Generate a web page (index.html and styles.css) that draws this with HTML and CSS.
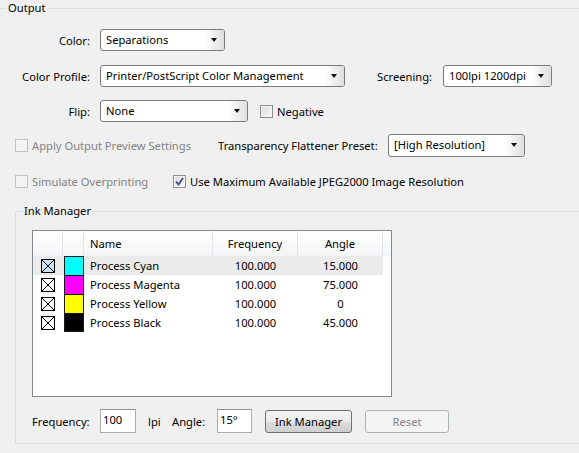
FILE: index.html
```html
<!DOCTYPE html>
<html>
  <head>
    <meta charset="UTF-8" />
    <title>Output</title>
    <link rel="stylesheet" href="styles.css">
  </head>
  <body>
    <div class="group-head"><span class="group-title">Output</span></div>

    <div class="row row-1">
      <span class="lbl">Color:</span>
      <div class="combo w-color"><span class="combo-text">Separations</span><span class="drop"></span></div>
    </div>

    <div class="row row-2">
      <span class="lbl">Color Profile:</span>
      <div class="combo w-profile"><span class="combo-text">Printer/PostScript Color Management</span><span class="drop"></span></div>
      <span class="lbl-screen">Screening:</span>
      <div class="combo w-screen"><span class="combo-text">100lpi 1200dpi</span><span class="drop"></span></div>
    </div>

    <div class="row row-3">
      <span class="lbl">Flip:</span>
      <div class="combo w-flip"><span class="combo-text">None</span><span class="drop"></span></div>
      <label class="check check-negative"><span class="box"></span>Negative</label>
    </div>

    <div class="row row-4">
      <label class="check disabled first-preview"><span class="box"></span>Apply Output Preview Settings</label>
      <span class="lbl-flat">Transparency Flattener Preset:</span>
      <div class="combo w-flat"><span class="combo-text">[High Resolution]</span><span class="drop"></span></div>
    </div>

    <div class="row row-5">
      <label class="check disabled first-overprint"><span class="box"></span>Simulate Overprinting</label>
      <label class="check">
        <span class="box checked">
          <svg width="9" height="9" viewBox="0 0 9 9"><path d="M1 4.5L3.5 7.5L8 1" fill="none" stroke="#3b4f8a" stroke-width="1.8"/></svg>
        </span>Use Maximum Available JPEG2000 Image Resolution
      </label>
    </div>

    <fieldset class="ink-group">
      <legend>Ink Manager</legend>

      <div class="ink-list">
        <div class="ink-head">
          <span class="col-check"></span>
          <span class="col-swatch"></span>
          <span class="col-name">Name</span>
          <span class="col-num">Frequency</span>
          <span class="col-num">Angle</span>
          <span class="col-rest"></span>
        </div>
        <div class="ink-row selected">
          <span class="col-check"><svg class="xbox xbox-hot" width="14" height="14" viewBox="0 0 14 14"><rect x="0.5" y="0.5" width="13" height="13"/><path d="M1 1L13 13M13 1L1 13"/></svg></span>
          <span class="col-swatch"><span class="swatch cyan"></span></span>
          <span class="col-name">Process Cyan</span>
          <span class="col-num">100.000</span>
          <span class="col-num">15.000</span>
        </div>
        <div class="ink-row">
          <span class="col-check"><svg class="xbox" width="14" height="14" viewBox="0 0 14 14"><rect x="0.5" y="0.5" width="13" height="13"/><path d="M1 1L13 13M13 1L1 13"/></svg></span>
          <span class="col-swatch"><span class="swatch magenta"></span></span>
          <span class="col-name">Process Magenta</span>
          <span class="col-num">100.000</span>
          <span class="col-num">75.000</span>
        </div>
        <div class="ink-row">
          <span class="col-check"><svg class="xbox" width="14" height="14" viewBox="0 0 14 14"><rect x="0.5" y="0.5" width="13" height="13"/><path d="M1 1L13 13M13 1L1 13"/></svg></span>
          <span class="col-swatch"><span class="swatch yellow"></span></span>
          <span class="col-name">Process Yellow</span>
          <span class="col-num">100.000</span>
          <span class="col-num">0</span>
        </div>
        <div class="ink-row">
          <span class="col-check"><svg class="xbox" width="14" height="14" viewBox="0 0 14 14"><rect x="0.5" y="0.5" width="13" height="13"/><path d="M1 1L13 13M13 1L1 13"/></svg></span>
          <span class="col-swatch"><span class="swatch black last"></span></span>
          <span class="col-name">Process Black</span>
          <span class="col-num">100.000</span>
          <span class="col-num">45.000</span>
        </div>
      </div>

      <div class="ink-controls">
        <span class="lbl-freq">Frequency:</span>
        <input class="field field-freq" type="text" value="100" />
        <span class="lbl-lpi">lpi</span>
        <span class="lbl-angle">Angle:</span>
        <input class="field field-angle" type="text" value="15°" />
        <button class="btn btn-ink">Ink Manager</button>
        <button class="btn btn-reset" disabled>Reset</button>
      </div>
    </fieldset>
  </body>
</html>
```

FILE: styles.css
```css
html,
body {
  margin: 0;
  width: 579px;
  height: 453px;
  overflow: hidden;
}
body {
  background-color: #f0f0f0;
  color: #000;
  font-family: "Noto Sans", "Open Sans", sans-serif;
  font-size: 11.2px;
}

/* group box title with rule */
.group-head {
  display: flex;
  align-items: center;
  height: 16px;
}
.group-head::before {
  content: "";
  width: 6px;
  border-top: 1px solid #d5dfe5;
}
.group-head::after {
  content: "";
  flex: 1;
  border-top: 1px solid #d5dfe5;
}
.group-title {
  padding: 0 2px;
  line-height: 16px;
}

.row {
  display: flex;
  align-items: center;
  height: 22px;
}
.row-1 {
  margin-top: 13px;
}
.row-2 {
  margin-top: 14px;
}
.row-3 {
  margin-top: 13px;
}
.row-4 {
  margin-top: 12px;
  height: 23px;
}
.row-5 {
  margin-top: 13px;
}
.lbl {
  width: 82px;
  margin: 0 10px 0 8px;
  text-align: right;
}
.lbl-screen {
  width: 55px;
  margin: 0 11px 0 32px;
  white-space: nowrap;
}
.lbl-flat {
  width: 158px;
  margin-right: 12px;
  white-space: nowrap;
}

/* combo boxes */
.combo {
  display: flex;
  box-sizing: border-box;
  height: 22px;
  border: 1px solid #7a7a7a;
  border-radius: 3px;
  background-color: #fff;
  overflow: hidden;
}
.row-4 .combo {
  height: 23px;
}
.combo-text {
  flex: 1;
  padding-left: 5px;
  line-height: 20px;
  white-space: nowrap;
  overflow: hidden;
}
.drop {
  position: relative;
  width: 19px;
  background: linear-gradient(to right, #ffffff, #dedede);
}
.drop::after {
  content: "";
  position: absolute;
  left: 6px;
  top: 8px;
  border-left: 3.5px solid transparent;
  border-right: 3.5px solid transparent;
  border-top: 4px solid #111;
}
.w-color {
  width: 125px;
}
.w-profile {
  width: 245px;
}
.w-screen {
  width: 109px;
}
.w-flip {
  width: 148px;
}
.w-flat {
  width: 137px;
}

/* check boxes */
.check {
  display: flex;
  align-items: center;
  white-space: nowrap;
}
.check .box {
  display: flex;
  align-items: center;
  justify-content: center;
  box-sizing: border-box;
  width: 13px;
  height: 13px;
  margin-right: 4px;
  border: 1px solid #8e8f8f;
  background: linear-gradient(135deg, #dcdcdc, #f8f8f8);
  box-shadow: inset 0 0 0 1px #f4f4f4;
}
.check-negative {
  margin-left: 12px;
}
.check.disabled {
  color: #838383;
}
.check.disabled .box {
  border-color: #c2c2c2;
  background: #f4f4f4;
  box-shadow: none;
}
.first-preview {
  width: 203px;
  margin-left: 15px;
}
.first-overprint {
  width: 158px;
  margin-left: 15px;
}

/* Ink Manager group, its right edge runs off the panel */
.ink-group {
  box-sizing: border-box;
  width: 564px;
  height: 241px;
  margin: 11px 0 0 15px;
  padding: 0;
  border: 1px solid #d5dfe5;
  border-right: none;
}
.ink-group legend {
  margin-left: 7px;
  padding: 0 1px;
  line-height: 16px;
}

.ink-list {
  box-sizing: border-box;
  width: 360px;
  height: 167px;
  margin: 11px 0 0 16px;
  border: 1px solid #828790;
  background-color: #fff;
}
.ink-head {
  display: flex;
  height: 25px;
  background: linear-gradient(#ffffff, #f3f4f6);
}
.ink-head span {
  box-sizing: border-box;
  line-height: 25px;
  border-right: 1px solid #e3e5e8;
}
.ink-head .col-rest {
  flex: 1;
  border-right: none;
}
.ink-row {
  display: flex;
  width: 350px;
  height: 19px;
  line-height: 19px;
}
.ink-row.selected {
  background-color: #ebebeb;
}
.col-check {
  display: flex;
  align-items: center;
  justify-content: center;
  width: 30px;
  flex: none;
}
.col-swatch {
  width: 21px;
  flex: none;
}
.col-name {
  width: 129px;
  padding-left: 6px;
  box-sizing: border-box;
  flex: none;
}
.col-num {
  width: 85px;
  text-align: center;
  flex: none;
}
.xbox rect {
  fill: #fff;
  stroke: #000;
}
.xbox path {
  stroke: #000;
  stroke-width: 1;
}
.xbox-hot rect {
  fill: #c9e3f5;
}
.swatch {
  display: block;
  box-sizing: border-box;
  width: 20px;
  height: 19px;
  margin-left: 1px;
  border: 1px solid #1a1a1a;
  border-bottom: none;
}
.swatch.last {
  border-bottom: 1px solid #1a1a1a;
}
.cyan {
  background-color: #00ffff;
}
.magenta {
  background-color: #ff00ff;
}
.yellow {
  background-color: #ffff00;
}
.black {
  background-color: #000;
}

/* frequency / angle controls */
.ink-controls {
  display: flex;
  align-items: center;
  height: 24px;
  margin: 12px 0 0 16px;
}
.lbl-freq {
  width: 68px;
}
.lbl-lpi {
  width: 24px;
  margin-left: 12px;
}
.lbl-angle {
  width: 45px;
}
.field {
  box-sizing: border-box;
  height: 24px;
  padding: 0 0 4px 2px;
  border: 1px solid #abadb3;
  border-top-color: #8e9199;
  background-color: #fff;
  font: inherit;
  color: #000;
}
.field-freq {
  width: 36px;
}
.field-angle {
  width: 35px;
}
.btn {
  box-sizing: border-box;
  height: 23px;
  padding: 0;
  border: 1px solid #707070;
  border-radius: 3px;
  background: linear-gradient(#f2f2f2 0%, #ebebeb 50%, #dddddd 51%, #cfcfcf 100%);
  font: inherit;
  color: #000;
}
.btn-ink {
  width: 87px;
  margin-left: 13px;
}
.btn-reset {
  width: 84px;
  margin-left: 13px;
  border-color: #adb2b5;
  background: #f4f4f4;
  color: #838383;
}
```
